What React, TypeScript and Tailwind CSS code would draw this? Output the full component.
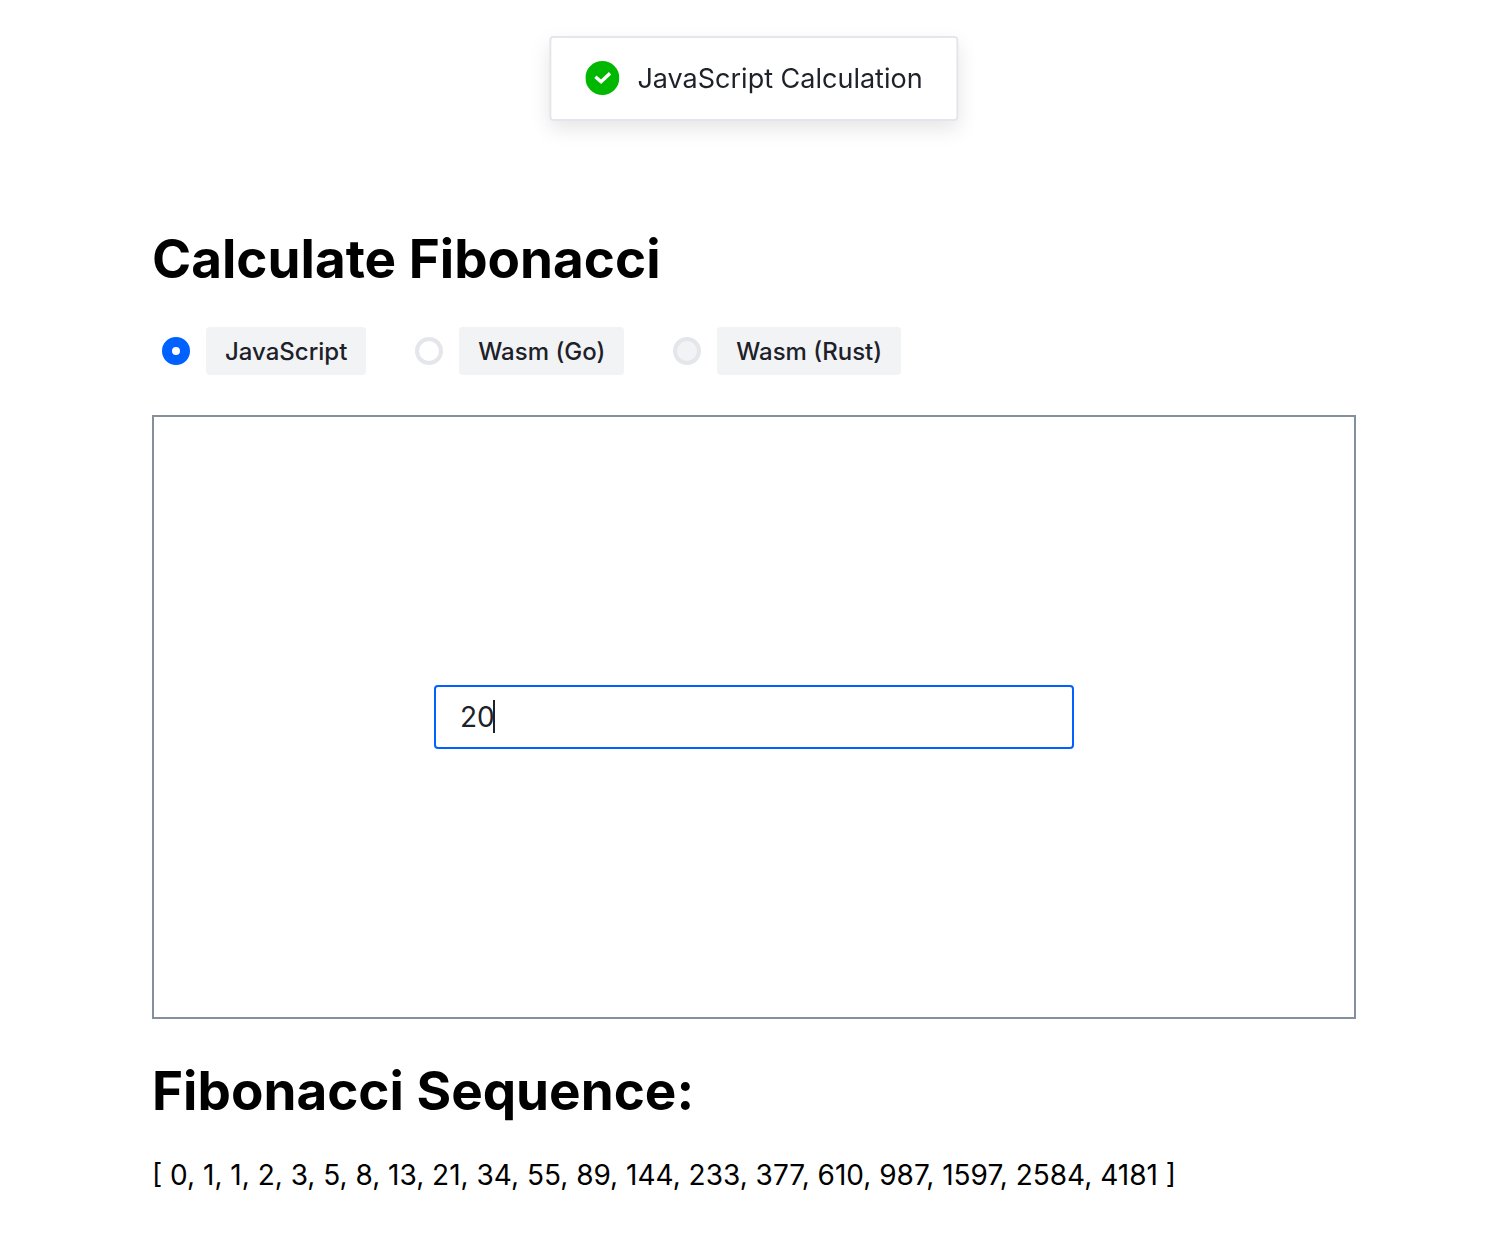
import { useState } from "react";

const engines = [
  { id: "js", label: "JavaScript", disabled: false },
  { id: "go", label: "Wasm (Go)", disabled: false },
  { id: "rust", label: "Wasm (Rust)", disabled: true },
];

function fibonacci(count: number) {
  const out: number[] = [];
  for (let i = 0; i < count; i++) out.push(i < 2 ? i : out[i - 1] + out[i - 2]);
  return out;
}

function Toast() {
  return (
    <div
      role="status"
      className="fixed top-9 left-1/2 ml-1 flex -translate-x-1/2 items-start gap-[18px] rounded border-2 border-[#e5e6eb] bg-white px-[34px] pt-[23px] pb-[22px] text-[27px] leading-9 whitespace-nowrap text-[#1d2129] shadow-[0_8px_20px_rgba(0,0,0,0.1)]"
    >
      <svg viewBox="0 0 34 34" className="size-[34px]" aria-hidden="true">
        <circle cx="17" cy="17" r="17" fill="#00b800" />
        <path d="M10 15.8 15.7 20.8 24.7 12.3" fill="none" stroke="#fff" strokeWidth="3.4" />
      </svg>
      <span>JavaScript Calculation</span>
    </div>
  );
}

export default function App() {
  const [engine, setEngine] = useState("js");
  const [value, setValue] = useState("20");
  const count = Math.min(Math.max(parseInt(value, 10) || 0, 0), 78);

  return (
    <div className="bg-white px-38 pt-[225px] pb-10 font-['Inter',sans-serif] text-black">
      <Toast />
      <main className="mr-[-8px]">
        <h1 className="text-[53px] leading-[68px] font-bold">Calculate Fibonacci</h1>
        <div className="mt-[34px] flex items-center gap-[39px]">
          {engines.map((e) => (
            <label key={e.id} className="flex items-center gap-4 pl-2.5 text-2xl font-medium text-[#1d2129]">
              <input
                type="radio"
                name="engine"
                value={e.id}
                checked={engine === e.id}
                disabled={e.disabled}
                onChange={() => setEngine(e.id)}
                className="size-7 appearance-none rounded-full border-4 border-[#e5e6eb] bg-white checked:border-[10px] checked:border-[#0061ff] disabled:bg-[#f2f3f5]"
              />
              <span className="h-12 rounded bg-[#f2f3f5] px-[19px] leading-[50px]">{e.label}</span>
            </label>
          ))}
        </div>
        <section className="mt-10 flex h-[604px] items-center justify-center border-2 border-[#86909c]">
          <div className="relative w-[640px] text-[28px] text-[#1d2129]">
            <input
              type="text"
              inputMode="numeric"
              aria-label="Fibonacci count"
              autoFocus
              value={value}
              maxLength={2}
              onChange={(e) => setValue(e.target.value)}
              className="block h-16 w-full rounded border-2 border-[#0061ff] px-6 caret-transparent outline-none"
            />
            <span
              aria-hidden="true"
              className="pointer-events-none absolute top-[15px] h-[33px] w-0.5 bg-[#1d2129]"
              style={{ left: `calc(24px + ${value.length}ch)` }}
            />
          </div>
        </section>
        <h2 className="mt-[38px] text-[53px] leading-[68px] font-bold">Fibonacci Sequence:</h2>
        <p className="mt-8 text-[28px] leading-[36px]">[ {fibonacci(count).join(", ")} ]</p>
      </main>
    </div>
  );
}
